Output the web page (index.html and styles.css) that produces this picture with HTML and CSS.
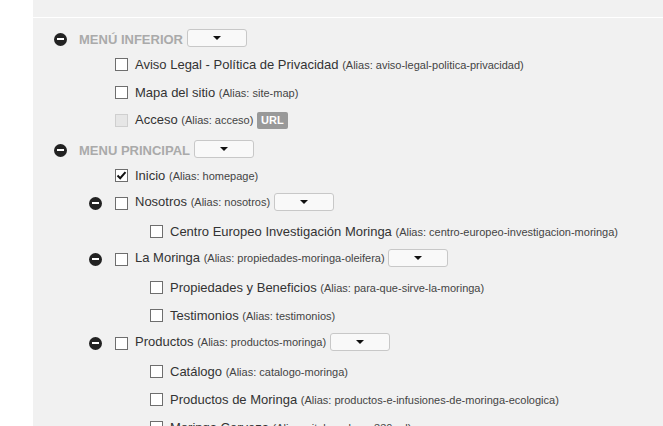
FILE: index.html
```html
<!DOCTYPE html>
<html lang="es">
<head>
  <meta charset="UTF-8">
  <title>Menús</title>
  <link rel="stylesheet" href="styles.css">
</head>
<body>
  <div class="page">
    <div class="side"></div>

    <div class="main">
      <div class="topbar"></div>

      <!-- Menú inferior -->
      <div class="menu">
        <div class="menu-head">
          <span class="toggle"></span>
          <span class="menu-title">Menú inferior</span>
          <button class="drop"><span class="caret"></span></button>
        </div>
        <ul class="tree">
          <li><div class="row"><span class="slot"></span><span class="box"></span><span class="text">Aviso Legal - Política de Privacidad <span class="alias">(Alias: aviso-legal-politica-privacidad)</span></span></div></li>
          <li><div class="row"><span class="slot"></span><span class="box"></span><span class="text">Mapa del sitio <span class="alias">(Alias: site-map)</span></span></div></li>
          <li><div class="row"><span class="slot"></span><span class="box disabled"></span><span class="text">Acceso <span class="alias">(Alias: acceso)</span> <span class="badge">URL</span></span></div></li>
        </ul>
      </div>

      <!-- Menu principal -->
      <div class="menu">
        <div class="menu-head">
          <span class="toggle"></span>
          <span class="menu-title">Menu principal</span>
          <button class="drop"><span class="caret"></span></button>
        </div>
        <ul class="tree">
          <li>
            <div class="row"><span class="slot"></span><span class="box checked"><svg viewBox="0 0 13 13" width="13" height="13"><path d="M2.5 6.5 L5.2 9.2 L10.5 3.2" fill="none" stroke="#111" stroke-width="2"/></svg></span><span class="text">Inicio <span class="alias">(Alias: homepage)</span></span></div>
          </li>
          <li>
            <div class="row"><span class="slot"><span class="toggle"></span></span><span class="box"></span><span class="text">Nosotros <span class="alias">(Alias: nosotros)</span> <button class="drop"><span class="caret"></span></button></span></div>
            <ul class="tree">
              <li><div class="row"><span class="slot"></span><span class="box"></span><span class="text">Centro Europeo Investigación Moringa <span class="alias">(Alias: centro-europeo-investigacion-moringa)</span></span></div></li>
            </ul>
          </li>
          <li>
            <div class="row"><span class="slot"><span class="toggle"></span></span><span class="box"></span><span class="text">La Moringa <span class="alias">(Alias: propiedades-moringa-oleifera)</span> <button class="drop"><span class="caret"></span></button></span></div>
            <ul class="tree">
              <li><div class="row"><span class="slot"></span><span class="box"></span><span class="text">Propiedades y Beneficios <span class="alias">(Alias: para-que-sirve-la-moringa)</span></span></div></li>
              <li><div class="row"><span class="slot"></span><span class="box"></span><span class="text">Testimonios <span class="alias">(Alias: testimonios)</span></span></div></li>
            </ul>
          </li>
          <li>
            <div class="row"><span class="slot"><span class="toggle"></span></span><span class="box"></span><span class="text">Productos <span class="alias">(Alias: productos-moringa)</span> <button class="drop"><span class="caret"></span></button></span></div>
            <ul class="tree">
              <li><div class="row"><span class="slot"></span><span class="box"></span><span class="text">Catálogo <span class="alias">(Alias: catalogo-moringa)</span></span></div></li>
              <li><div class="row"><span class="slot"></span><span class="box"></span><span class="text">Productos de Moringa <span class="alias">(Alias: productos-e-infusiones-de-moringa-ecologica)</span></span></div></li>
              <li><div class="row"><span class="slot"></span><span class="box"></span><span class="text">Moringa Cerveza <span class="alias">(Alias: vitalmor-beer-330-ml)</span></span></div></li>
            </ul>
          </li>
        </ul>
      </div>
    </div>
  </div>
</body>
</html>
```

FILE: styles.css
```css
body {
  margin: 0;
  font-family: 'Liberation Sans', Arial, sans-serif;
  background: #fff;
  color: #333;
  height: 100vh;
  overflow: hidden;
}

.page {
  display: flex;
  height: 100%;
}

.side {
  width: 33px;
  flex-shrink: 0;
  background: #fff;
}

.main {
  flex: 1;
  background: #f1f1f1;
  padding: 0 0 0 21px;
}

.topbar {
  height: 17px;
  border-bottom: 1px solid #fff;
  margin-left: -21px;
  margin-bottom: 10px;
}

.menu {
  margin-top: 5px;
}

.menu-head {
  display: flex;
  align-items: center;
  height: 22px;
}

.menu-title {
  margin-left: 12px;
  font-size: 13px;
  font-weight: bold;
  text-transform: uppercase;
  color: #aaa;
}

.menu-head .drop {
  margin-left: 4px;
}

/* minus circle */
.toggle {
  display: inline-block;
  position: relative;
  width: 13px;
  height: 13px;
  border-radius: 50%;
  background: #222;
}

.toggle::after {
  content: '';
  position: absolute;
  left: 3px;
  top: 5.5px;
  width: 7px;
  height: 2px;
  background: #fff;
}

.drop {
  display: inline-block;
  vertical-align: middle;
  width: 60px;
  height: 18px;
  padding: 0;
  background: #f9f9f9;
  border: 1px solid #c8c8c8;
  border-radius: 3px;
  cursor: pointer;
  position: relative;
  top: -1px;
}

.caret {
  display: inline-block;
  width: 0;
  height: 0;
  border-left: 4px solid transparent;
  border-right: 4px solid transparent;
  border-top: 4px solid #111;
  vertical-align: middle;
  position: relative;
  top: -1px;
}

.tree {
  list-style: none;
  margin: 0;
  padding: 0 0 0 35px;
}

.row {
  display: flex;
  align-items: center;
  height: 28px;
}

.slot {
  width: 13px;
  height: 13px;
  flex-shrink: 0;
  display: flex;
}

.box {
  width: 11px;
  height: 11px;
  margin-left: 13px;
  flex-shrink: 0;
  border: 1px solid #6e6e6e;
  background: #fff;
  display: flex;
}

.box.disabled {
  border-color: #cfcfcf;
  background: #e6e6e6;
}

.box.checked svg {
  margin: -1px;
}

.text {
  margin-left: 7px;
  font-size: 13px;
  color: #333;
  white-space: nowrap;
}

.alias {
  font-size: 11px;
  color: #444;
}

.badge {
  display: inline-block;
  background: #999;
  color: #fff;
  font-size: 11px;
  font-weight: bold;
  padding: 2px 4px;
  border-radius: 2px;
  line-height: 13px;
}
```
